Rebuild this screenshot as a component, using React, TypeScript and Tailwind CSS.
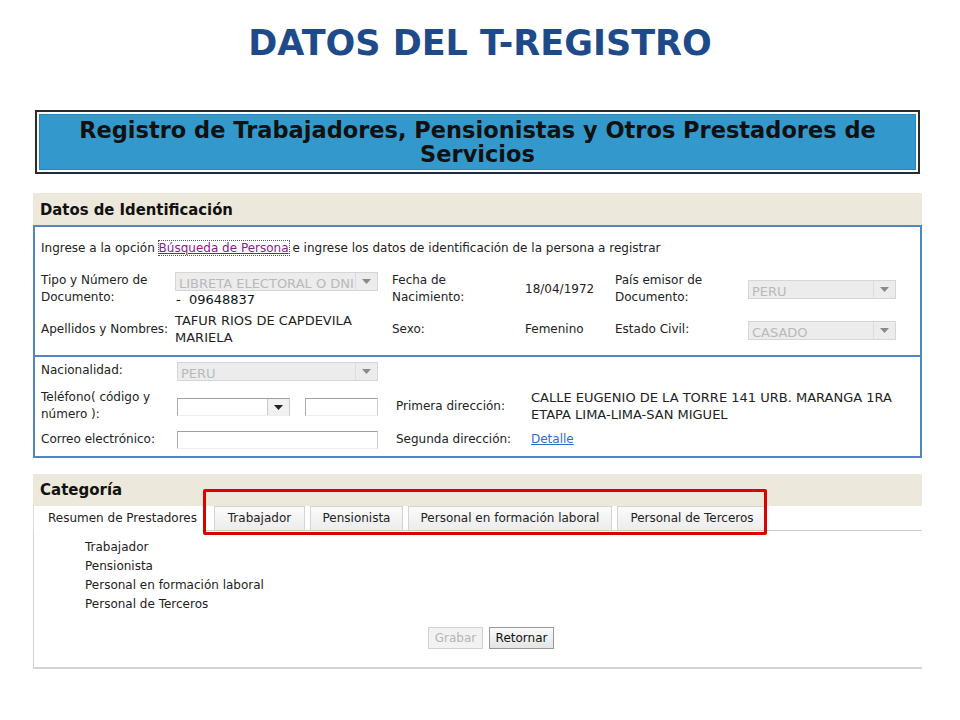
import { ReactNode } from 'react'

const Arrow = ({ dark = false }: { dark?: boolean }) => (
  <svg width="9" height="5" viewBox="0 0 9 5" aria-hidden="true">
    <path d="M0 0h9L4.5 5z" fill={dark ? '#222' : '#8a8a8a'} />
  </svg>
)

const DisabledSelect = ({ value, width }: { value: string; width: string }) => (
  <div
    className={`flex h-[19px] items-stretch border border-[#d6d6d6] bg-[#ececec] ${width}`}
  >
    <span className="flex-1 overflow-hidden whitespace-nowrap pl-[3px] pt-[3px] text-[13px] leading-[15px] text-[#b9b9b9]">
      {value}
    </span>
    <span className="flex w-[22px] items-center justify-center border-l border-[#dcdcdc]">
      <Arrow />
    </span>
  </div>
)

const Label = ({ children }: { children: ReactNode }) => (
  <span className="text-[#222]">{children}</span>
)

export default function App() {
  return (
    <div className="h-[720px] w-[960px] overflow-hidden bg-white font-['DejaVu_Sans',sans-serif] text-[12px] leading-[17px] text-[#222]">
      <h1 className="pt-[22px] text-center font-['DejaVu_Sans',sans-serif] text-[35px] font-bold leading-[42px] text-[#1f4a8a]">
        DATOS DEL T-REGISTRO
      </h1>

      <div className="ml-[33px] w-[889px]">
        <div className="mx-[2px] mt-[46px] border-2 border-[#2b2b2b] bg-white p-[2px]">
          <div className="border border-[#2c86bd] bg-[#3399cc] py-[3px] text-center font-['DejaVu_Sans',sans-serif] text-[22.5px] font-bold leading-[24px] text-[#111]">
            Registro de Trabajadores, Pensionistas y Otros Prestadores de
            <br />
            Servicios
          </div>
        </div>

        {/* Datos de Identificación */}
        <div className="mt-[19px] flex h-[32px] items-center bg-[#ece9dc] pl-[7px] font-['DejaVu_Sans_Condensed',sans-serif] text-[16.5px] font-bold text-[#111]">
          Datos de Identificación
        </div>

        <div className="border-2 border-[#5683c2] pl-[6px] pr-[24px]">
          <p className="pt-[13px]">
            Ingrese a la opción{' '}
            <span className="text-[#8b1a8b] underline outline-1 outline-dotted outline-[#555]">
              Búsqueda de Persona
            </span>{' '}
            e ingrese los datos de identificación de la persona a registrar
          </p>

          <div className="mt-[14px] grid grid-cols-[134px_217px_133px_90px_133px_148px] items-center">
            <Label>
              Tipo y Número de
              <br />
              Documento:
            </Label>
            <div className="flex flex-col pt-[1px]">
              <DisabledSelect value="LIBRETA ELECTORAL O DNI" width="w-[203px]" />
              <span className="pl-[1px] pt-[1px] text-[13px] leading-[15px] text-[#111]">
                -&nbsp;&nbsp;09648837
              </span>
            </div>
            <Label>
              Fecha de
              <br />
              Nacimiento:
            </Label>
            <span>18/04/1972</span>
            <Label>
              País emisor de
              <br />
              Documento:
            </Label>
            <DisabledSelect value="PERU" width="w-[148px]" />
          </div>

          <div className="mt-[5px] grid grid-cols-[134px_217px_133px_90px_133px_148px] items-center pb-[9px]">
            <Label>Apellidos y Nombres:</Label>
            <span className="text-[13px]">
              TAFUR RIOS DE CAPDEVILA
              <br />
              MARIELA
            </span>
            <Label>Sexo:</Label>
            <span>Femenino</span>
            <Label>Estado Civil:</Label>
            <div className="pt-[3px]">
              <DisabledSelect value="CASADO" width="w-[148px]" />
            </div>
          </div>
        </div>

        <div className="border-2 border-t-0 border-[#5683c2] pb-[7px] pl-[6px] pr-[24px]">
          <div className="grid grid-cols-[136px_219px_135px_1fr] pt-[4px]">
            <span className="pt-[1px]">Nacionalidad:</span>
            <div className="pt-[1px]">
              <DisabledSelect value="PERU" width="w-[201px]" />
            </div>
            <span />
            <span />

            <span className="pt-[8px]">
              Teléfono( código y
              <br />
              número ):
            </span>
            <div className="flex gap-[15px] pt-[17px]">
              <div className="flex h-[18px] w-[113px] border border-b-[#eeeeee] border-l-[#aaaaaa] border-r-[#cccccc] border-t-[#a0a0a0]">
                <span className="flex-1" />
                <span className="flex w-[22px] items-center justify-center border-l border-[#c8c8c8] bg-[#f2f2f2]">
                  <Arrow dark />
                </span>
              </div>
              <div className="h-[18px] w-[73px] border border-b-[#eeeeee] border-l-[#aaaaaa] border-r-[#cccccc] border-t-[#a0a0a0]" />
            </div>
            <span className="flex items-center pt-[8px]">Primera dirección:</span>
            <span className="pt-[8px] text-[13px]">
              CALLE EUGENIO DE LA TORRE 141 URB. MARANGA 1RA
              <br />
              ETAPA LIMA-LIMA-SAN MIGUEL
            </span>

            <span className="pt-[8px]">Correo electrónico:</span>
            <div className="pt-[8px]">
              <div className="h-[18px] w-[201px] border border-b-[#eeeeee] border-l-[#aaaaaa] border-r-[#cccccc] border-t-[#a0a0a0]" />
            </div>
            <span className="pt-[8px]">Segunda dirección:</span>
            <span className="pt-[8px]">
              <span className="text-[#2a6fcf] underline">Detalle</span>
            </span>
          </div>
        </div>

        {/* Categoría */}
        <div className="relative mt-[16px]">
          <div className="flex h-[32px] items-center bg-[#ece9dc] pl-[7px] text-[15px] font-bold text-[#111]">
            Categoría
          </div>

          <div className="flex h-[25px] items-end">
            <div className="flex h-[25px] w-[170px] items-center justify-center border-l border-[#dddddd] bg-white pl-[8px]">
              Resumen de Prestadores
            </div>
            <div className="flex flex-1 items-end gap-[5px] border-b border-[#cccccc] pl-[11px]">
              {[
                ['Trabajador', 'w-[91px]'],
                ['Pensionista', 'w-[93px]'],
                ['Personal en formación laboral', 'w-[204px]'],
                ['Personal de Terceros', 'w-[150px]'],
              ].map(([name, w]) => (
                <div
                  key={name}
                  className={`flex h-[24px] items-center justify-center border border-b-0 border-[#d4d4d4] bg-gradient-to-b from-[#fbfbfb] to-[#ececec] ${w}`}
                >
                  {name}
                </div>
              ))}
            </div>
          </div>

          <div className="border-b-2 border-l border-[#d4d4d4] pb-[18px] pt-[7px]">
            <ul className="pl-[51px] leading-[19px]">
              <li>Trabajador</li>
              <li>Pensionista</li>
              <li>Personal en formación laboral</li>
              <li>Personal de Terceros</li>
            </ul>
            <div className="mt-[13px] flex gap-[6px] pl-[394px]">
              <button
                type="button"
                disabled
                className="h-[22px] w-[55px] border border-[#d2d2d2] bg-[#f2f2f2] text-[12px] text-[#b5b5b5]"
              >
                Grabar
              </button>
              <button
                type="button"
                className="h-[22px] w-[65px] border border-[#999999] bg-gradient-to-b from-[#fafafa] to-[#e4e4e4] text-[12px] text-[#111]"
              >
                Retornar
              </button>
            </div>
          </div>

          <div className="pointer-events-none absolute left-[170px] top-[15px] h-[46px] w-[564px] rounded-[2px] border-[3px] border-[#dd0000]" />
        </div>
      </div>
    </div>
  )
}
